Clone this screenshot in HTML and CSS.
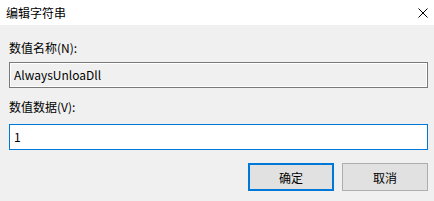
FILE: index.html
```html
<!DOCTYPE html>
<html lang="zh-CN">
<head>
    <meta charset="UTF-8">
    <title>编辑字符串</title>
    <link rel="stylesheet" href="styles.css">
</head>
<body>
    <div class="dialog">
        <div class="titlebar">
            <span class="title">编辑字符串</span>
            <svg class="close" width="10" height="10" viewBox="0 0 10 10">
                <path d="M0.5 0.5 L9.5 9.5 M9.5 0.5 L0.5 9.5" stroke="#000" stroke-width="1" fill="none"/>
            </svg>
        </div>
        <div class="content">
            <div class="label label-name">数值名称(N):</div>
            <div class="field readonly">AlwaysUnloaDll</div>
            <div class="label label-data">数值数据(V):</div>
            <div class="field active">1</div>
            <div class="buttons">
                <button class="btn default">确定</button>
                <button class="btn">取消</button>
            </div>
        </div>
    </div>
</body>
</html>
```

FILE: styles.css
```css
* {
    margin: 0;
    padding: 0;
    box-sizing: border-box;
}

body {
    font-family: "Noto Sans CJK SC", "Noto Sans", sans-serif;
    font-size: 12px;
    color: #000;
    background: #f0f0f0;
    width: 434px;
    height: 201px;
    overflow: hidden;
}

.dialog {
    height: 201px;
    display: flex;
    flex-direction: column;
}

.titlebar {
    height: 25px;
    background: #fff;
    display: flex;
    align-items: center;
    justify-content: space-between;
    padding: 0 6px 0 6px;
}

.title {
    line-height: 16px;
}

.close {
    display: block;
    margin-top: 1px;
}

.content {
    flex: 1;
    padding: 0 6px 0 9px;
    display: flex;
    flex-direction: column;
}

.label {
    line-height: 16px;
}

.label-name {
    margin-top: 15px;
}

.label-data {
    margin-top: 11px;
}

.field {
    height: 26px;
    line-height: 24px;
    padding-left: 4px;
    margin-top: 6px;
}

.field.readonly {
    border: 1px solid #7a7a7a;
    box-shadow: inset 0 0 0 1px #fff;
    background: #f0f0f0;
}

.field.active {
    border: 1px solid #0078d7;
    background: #fff;
    margin-top: 9px;
}

.buttons {
    display: flex;
    justify-content: flex-end;
    gap: 8px;
    margin-top: 13px;
}

.btn {
    width: 86px;
    height: 28px;
    font-family: inherit;
    font-size: 12px;
    color: #000;
    background: #e1e1e1;
    border: 1px solid #adadad;
}

.btn.default {
    border: 2px solid #0078d7;
}
```
